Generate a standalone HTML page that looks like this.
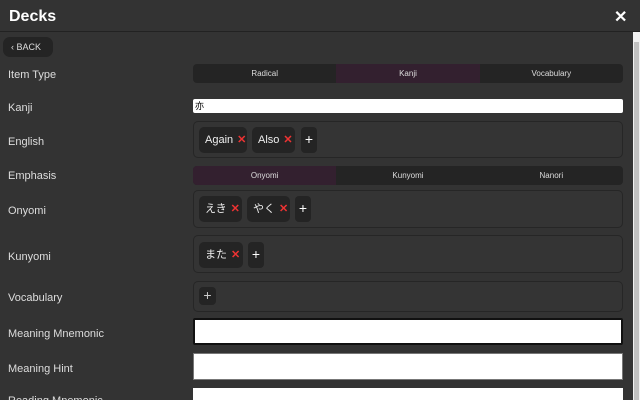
<!DOCTYPE html>
<html style="width:640px;height:400px;overflow:hidden"><head><style>
*{box-sizing:border-box;margin:0;padding:0}
body{width:640px;height:400px;overflow:hidden;background:#333;font-family:"Liberation Sans","Noto Sans CJK JP",sans-serif;color:#eee;position:relative}
.hdr{position:absolute;left:0;top:0;width:640px;height:32px;border-bottom:1px solid #222;background:#333}
.hdr h1{position:absolute;left:9px;top:8px;font-size:16px;font-weight:bold;color:#fff}
.x{position:absolute;left:614px;top:7px;font-size:16px;color:#fff;font-weight:bold}
.sb{position:absolute;left:633px;top:32px;width:7px;height:368px;background:#f1f1f1}
.sb div{position:absolute;left:1px;top:10px;width:5px;height:358px;background:#c1c1c1}
.back{position:absolute;left:3px;top:37px;width:50px;height:20px;background:#242424;border-radius:7px;font-size:9px;color:#ddd;line-height:20px;padding-left:8px}
.lbl{position:absolute;left:8px;font-size:11px;color:#ddd}
.seg{position:absolute;left:193px;width:430px;height:19px;background:#242424;border-radius:4px;display:flex;font-size:8px;color:#ddd;overflow:hidden}
.seg div{flex:1;text-align:center;line-height:19px}
.seg .on{background:#33202f}
.inp{position:absolute;left:193px;width:430px;background:#fff}
.box{position:absolute;left:193px;width:430px;border:1px solid #262626;border-radius:5px;background:#343434}
.chip{position:absolute;height:26px;background:#242424;border-radius:5px;font-size:11px;line-height:26px;padding-left:6px;color:#eee}
.chip i{font-style:normal;color:#e33;font-weight:bold;margin-left:4px}
.plus{position:absolute;width:16px;height:26px;background:#242424;border-radius:4px;text-align:center;line-height:25px;font-size:14px;color:#fff}
</style></head><body>
<div class="hdr"><h1>Decks</h1><div class="x">✕</div></div>
<div class="sb"><div></div></div>
<div class="back">‹ BACK</div>
<div class="lbl" style="top:69px">Item Type</div>
<div class="seg" style="top:64px"><div>Radical</div><div class="on">Kanji</div><div>Vocabulary</div></div>
<div class="lbl" style="top:102px">Kanji</div>
<div class="inp" style="top:99px;height:14px;border-radius:2px;font-size:9px;color:#000;padding-left:2px;line-height:14px">亦</div>
<div class="lbl" style="top:136px">English</div>
<div class="box" style="top:121px;height:37px">
 <div class="chip" style="left:5px;top:5px;width:48px">Again<i>✕</i></div>
 <div class="chip" style="left:58px;top:5px;width:43px">Also<i>✕</i></div>
 <div class="plus" style="left:107px;top:5px">+</div>
</div>
<div class="lbl" style="top:170px">Emphasis</div>
<div class="seg" style="top:166px"><div class="on">Onyomi</div><div>Kunyomi</div><div>Nanori</div></div>
<div class="lbl" style="top:205px">Onyomi</div>
<div class="box" style="top:190px;height:38px">
 <div class="chip" style="left:5px;top:5px;width:43px">えき<i>✕</i></div>
 <div class="chip" style="left:53px;top:5px;width:43px">やく<i>✕</i></div>
 <div class="plus" style="left:101px;top:5px">+</div>
</div>
<div class="lbl" style="top:251px">Kunyomi</div>
<div class="box" style="top:235px;height:38px">
 <div class="chip" style="left:5px;top:6px;width:44px">また<i>✕</i></div>
 <div class="plus" style="left:54px;top:6px">+</div>
</div>
<div class="lbl" style="top:292px">Vocabulary</div>
<div class="box" style="top:281px;height:31px">
 <div class="plus" style="left:5px;top:5px;width:17px;height:18px;line-height:17px;color:#ccc">+</div>
</div>
<div class="lbl" style="top:328px">Meaning Mnemonic</div>
<div class="inp" style="top:318px;height:27px;border:2px solid #111;border-radius:2px"></div>
<div class="lbl" style="top:363px">Meaning Hint</div>
<div class="inp" style="top:353px;height:27px;border:1px solid #777"></div>
<div class="lbl" style="top:395px">Reading Mnemonic</div>
<div class="inp" style="top:388px;height:12px"></div>
</body></html>
